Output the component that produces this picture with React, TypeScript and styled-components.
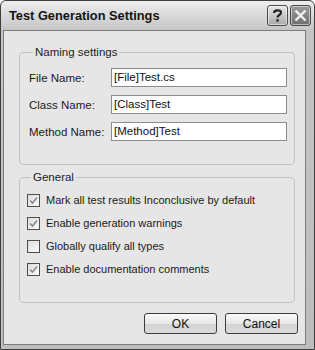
import styled, { createGlobalStyle } from "styled-components";

const GlobalStyle = createGlobalStyle`
  html, body {
    margin: 0;
    padding: 0;
    background: #ffffff;
  }
  * {
    box-sizing: border-box;
  }
`;

const Window = styled.div`
  width: 315px;
  height: 350px;
  display: flex;
  flex-direction: column;
  border: 1px solid #3f3f3f;
  border-radius: 6px 6px 0 0;
  background: linear-gradient(#eeeeee, #c4c4c4 30px, #bdbdbd);
  padding: 0 8px 4px 2px;
  font-family: "Liberation Sans", Arial, sans-serif;
  color: #161616;
`;

const TitleBar = styled.div`
  height: 29px;
  display: flex;
  align-items: center;
  justify-content: space-between;
  padding: 0 0 0 6px;
  margin-right: -6px;
`;

const Title = styled.div`
  font-weight: 700;
  font-size: 12.8px;
  color: #141414;
`;

const Caption = styled.div`
  display: flex;
  gap: 2px;
  padding-right: 1px;
`;

const CaptionButton = styled.div<{ $dark?: boolean }>`
  width: 21px;
  height: 21px;
  border: 1px solid #4a4a4a;
  border-radius: 3px;
  display: flex;
  align-items: center;
  justify-content: center;
  background: ${(p) =>
    p.$dark
      ? "linear-gradient(#9c9c9c, #6f6f6f)"
      : "linear-gradient(#e8e8e8, #a9a9a9)"};
  box-shadow: inset 0 0 0 1px rgba(255, 255, 255, 0.5);
`;

const Body = styled.div`
  flex: 1;
  background: #e6e6e6;
  border: 1px solid #7c7c7c;
  padding: 14px 7px 0 12px;
  display: flex;
  flex-direction: column;
`;

const Group = styled.fieldset<{ $pad: string }>`
  margin: 0 3px;
  border: 1px solid #c2c2c2;
  border-radius: 4px;
  padding: ${(p) => p.$pad};
  min-width: 0;
  display: flex;
  flex-direction: column;

  & + & {
    margin-top: 5px;
  }
`;

const Legend = styled.legend`
  font-size: 11.5px;
  line-height: 14px;
  padding: 0 2px;
  margin-left: 4px;
  color: #222;
`;

const FieldRow = styled.div`
  display: flex;
  align-items: center;
  height: 19px;
  & + & {
    margin-top: 8px;
  }
`;

const Label = styled.label`
  width: 82px;
  font-size: 11.5px;
  color: #1a1a1a;
`;

const TextBox = styled.div`
  flex: 1;
  height: 19px;
  background: #ffffff;
  border: 1px solid #8c8c8c;
  font-size: 11.5px;
  line-height: 17px;
  padding-left: 2px;
  color: #111;
`;

const CheckRow = styled.div`
  display: flex;
  align-items: center;
  height: 16px;
  gap: 6px;
  font-size: 11px;
  color: #1a1a1a;
  & + & {
    margin-top: 7px;
  }
`;

const Box = styled.div`
  width: 13px;
  height: 13px;
  border: 1px solid #4e4e4e;
  background: linear-gradient(135deg, #dcdcdc, #fafafa);
  display: flex;
  align-items: center;
  justify-content: center;
`;

const ButtonRow = styled.div`
  display: flex;
  justify-content: flex-end;
  gap: 8px;
  margin-top: 10px;
`;

const Button = styled.button`
  width: 73px;
  height: 21px;
  border: 1px solid #3c3c3c;
  border-radius: 3px;
  background: linear-gradient(#fbfbfb, #e6e6e6 50%, #d2d2d2 51%, #dcdcdc);
  font-family: "Liberation Sans", Arial, sans-serif;
  font-size: 12px;
  color: #111;
  padding: 0;
`;

const fields = [
  { label: "File Name:", value: "[File]Test.cs" },
  { label: "Class Name:", value: "[Class]Test" },
  { label: "Method Name:", value: "[Method]Test" },
];

const options = [
  { label: "Mark all test results Inconclusive by default", checked: true },
  { label: "Enable generation warnings", checked: true },
  { label: "Globally qualify all types", checked: false },
  { label: "Enable documentation comments", checked: true },
];

function Check({ checked }: { checked: boolean }) {
  return (
    <Box>
      {checked && (
        <svg width="9" height="9" viewBox="0 0 9 9">
          <path
            d="M1 4.5 L3.5 7 L8 1.5"
            fill="none"
            stroke="#8a8a8a"
            strokeWidth="1.6"
          />
        </svg>
      )}
    </Box>
  );
}

export default function App() {
  return (
    <>
      <GlobalStyle />
      <Window>
        <TitleBar>
          <Title>Test Generation Settings</Title>
          <Caption>
            <CaptionButton>
              <svg width="13" height="15" viewBox="0 0 13 15">
                <path
                  d="M3 5 C3 1.5 10 1.5 10 4.5 C10 7 6.5 7 6.5 9.5"
                  fill="none"
                  stroke="#222"
                  strokeWidth="2.2"
                />
                <rect x="5.3" y="11.2" width="2.4" height="2.4" fill="#222" />
              </svg>
            </CaptionButton>
            <CaptionButton $dark>
              <svg width="13" height="13" viewBox="0 0 13 13">
                <path
                  d="M1.5 1.5 L11.5 11.5 M11.5 1.5 L1.5 11.5"
                  stroke="#f2f2f2"
                  strokeWidth="2.4"
                />
              </svg>
            </CaptionButton>
          </Caption>
        </TitleBar>
        <Body>
          <Group $pad="9px 7px 23px 9px">
            <Legend>Naming settings</Legend>
            {fields.map((f) => (
              <FieldRow key={f.label}>
                <Label>{f.label}</Label>
                <TextBox>{f.value}</TextBox>
              </FieldRow>
            ))}
          </Group>
          <Group $pad="8px 7px 25px 7px">
            <Legend>General</Legend>
            {options.map((o) => (
              <CheckRow key={o.label}>
                <Check checked={o.checked} />
                {o.label}
              </CheckRow>
            ))}
          </Group>
          <ButtonRow>
            <Button>OK</Button>
            <Button>Cancel</Button>
          </ButtonRow>
        </Body>
      </Window>
    </>
  );
}
